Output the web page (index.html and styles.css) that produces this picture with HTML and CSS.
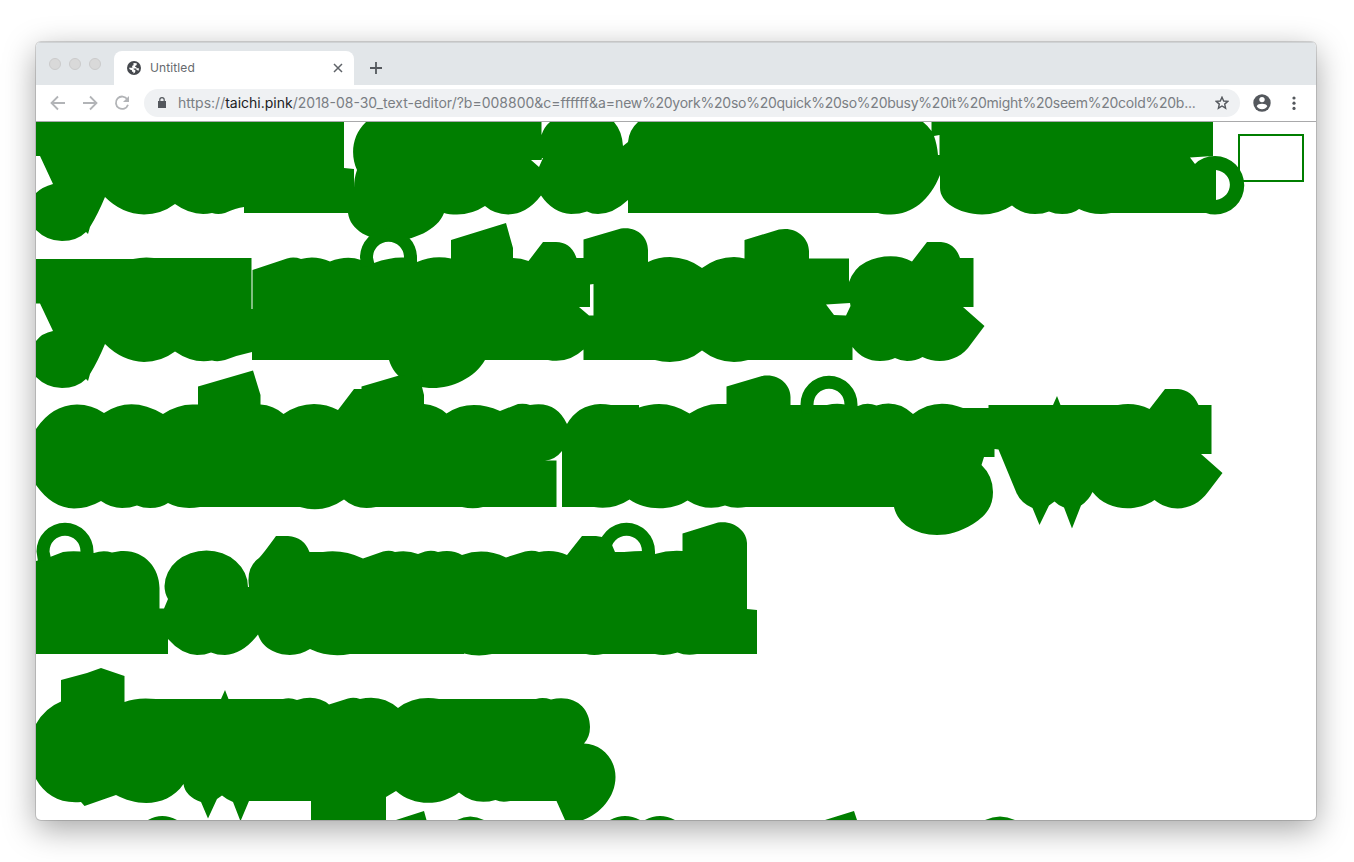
FILE: index.html
```html
<!DOCTYPE html>
<html lang="en">
<head>
<meta charset="utf-8">
<title>Untitled</title>
<link rel="stylesheet" href="styles.css">
</head>
<body>
<main class="window">
  <header class="tabstrip">
    <div class="lights"><i></i><i></i><i></i></div>
    <div class="tab">
      <svg class="globe" viewBox="0 0 14 14"><circle cx="7" cy="7" r="7" fill="#45484d"/><path d="M1.900 6.800H5Q6.900 6.900 6.900 8.800H8.300V10.600Q8 12.200 6.400 12.400V10.700H5V9.300Q2.300 9.200 1.900 6.800ZM6.500 1.900L9.700 2.300V3.700Q9.500 4.700 8.200 4.700V6.100H9.400V7.200H11.900Q12.200 8.700 11.100 10.100Q10.600 8.700 9.200 8.500V7.500H6.300Q5 7 5.100 5.500Q5.300 4.300 6.500 4.200Z" fill="#fff"/></svg>
      <span class="title">Untitled</span>
      <svg class="close" viewBox="0 0 10 10"><path d="M1 1L9 9M9 1L1 9" stroke="#5f6368" stroke-width="1.500"/></svg>
    </div>
    <svg class="plus" viewBox="0 0 12 12"><path d="M6 0V12M0 6H12" stroke="#54585d" stroke-width="1.800"/></svg>
  </header>
  <nav class="toolbar">
    <svg class="nav" viewBox="0 0 16 16"><path d="M15 8H2M8 1.500L1.500 8L8 14.500" fill="none" stroke="#b2b4b7" stroke-width="1.800"/></svg>
    <svg class="nav" viewBox="0 0 16 16"><path d="M1 8H14M8 1.500L14.500 8L8 14.500" fill="none" stroke="#b2b4b7" stroke-width="1.800"/></svg>
    <svg class="nav" viewBox="0 0 16 16"><path d="M13.300 4.300A6.200 6.200 0 1 0 14 9.700" fill="none" stroke="#b2b4b7" stroke-width="1.800"/><path d="M15 1V7H9Z" fill="#b2b4b7"/></svg>
    <div class="address">
      <svg class="lock" viewBox="0 0 8 11"><path d="M0 4H8V11H0Z" fill="#54585d"/><path d="M1.800 4V2.700A2.200 2.100 0 0 1 6.200 2.700V4" fill="none" stroke="#54585d" stroke-width="1.200"/></svg>
      <span class="url">https://<b>taichi.pink</b>/2018-08-30_text-editor/?b=008800&amp;c=ffffff&amp;a=<span class="query">new%20york%20so%20quick%20so%20busy%20it%20might%20seem%20cold%20b...</span></span>
      <svg class="star" viewBox="0 0 14 14"><path d="M7 1.200L8.700 5L12.800 5.400L9.700 8.100L10.600 12.200L7 10L3.400 12.200L4.300 8.100L1.200 5.400L5.300 5Z" fill="none" stroke="#54585d" stroke-width="1.400"/></svg>
    </div>
    <svg class="user" viewBox="0 0 18 18"><circle cx="9" cy="9" r="8.700" fill="#54585d"/><circle cx="9" cy="5.600" r="2.700" fill="#fff"/><path d="M3.700 12.200Q5 9.800 9 9.800T14.300 12.200Q12.500 15.200 9 15.200T3.700 12.200Z" fill="#fff"/></svg>
    <svg class="dots" viewBox="0 0 4 14"><g fill="#54585d"><circle cx="2" cy="2" r="1.600"/><circle cx="2" cy="7.200" r="1.600"/><circle cx="2" cy="12.400" r="1.600"/></g></svg>
  </nav>
  <section class="page">
    <svg class="canvas" viewBox="36 122 1280 698">
      <defs><path id="ring" d="M-28.500 0A28.500 28.800 0 0 1 28.500 0V8H15.500V0A15.500 15.800 0 0 0 -15.500 0L-14 7L-27 10Z"/></defs>
      <g fill="#007e00" fill-rule="evenodd">
        <!-- line 1 -->
        <path d="M36 122H344V168L354 169V213H244V207Q236 208 225 213Q218 215 212 213Q193 217 175 204Q161 214.500 144 214.500Q122 214 105 197Q98 214 90 227L88 234L86 232Q77 241 62 241Q47 241 36 230V193Q42 187 53 184L40 156H36Z"/>
        <path d="M366 122H541.500V135Q544 127 550 122H614Q622 131 623 146L628 142Q629 130 638 122H923Q927 125 931.500 131V122H1213V156L1190 157.500L1195 164Q1203 156 1215 156A29.250 29.250 0 0 1 1215 214.500Q1210 214.500 1206 213H1111Q1106 214 1101 214Q1089 214 1079 209Q1073 214 1062 214Q1055 214 1049 211.500Q1043 214 1035 214Q1022 214 1012 205.500Q998 214.500 982 214.500C958 214 940 202 940 188V175C930 200 912 214.500 891 214.500Q883 214.500 878 213H628V200Q613 214 598 214Q592 214 587 211.500Q580 214 571 214Q553 213 541 195.500Q527 214 508 214.500Q494 214 485 206Q472 214.500 457 214.500Q449 214.500 444 213C438 230 412 241 392 241C370 241 350 230 348 213H354V188Q354 178 357 170C350 155 352 135 366 122ZM531 160H541.500L542 158L543 158L539 167ZM934 136L939.500 135V155H938Q937 144 934 136ZM1216 170V200C1234 197 1235 173 1216 170Z"/>
        <!-- line 2 -->
        <path d="M36 259H133Q144 256.500 154 258H251.500V309H252.500V270L287 258.500Q294 256.500 301 259Q315 255 330 261.500Q347 255 361 260L374 263Q390 257 404 257.500L417 262Q433 255 451 258.500V240L506 223L513 248V258Q521 258 528.500 261L543 242H556Q571 242 576.500 258H583.500V239.500L621 228.500C637 226 648 237 648 250V262Q658 257 670 257Q688 257.500 702 268Q717 257 734 257Q740 257 744.500 258.500V240L779 229.500C796 226 809 238 809 251V258.500H849V282Q854 268 866 262C880 255 899 254 912 261.500L927 242H941Q955 243 960 258H973.500V307H963L984.500 326L971 344C960 361 939 365 922.500 357Q916 361 907 361Q901 361 895 358Q889 361 880 361Q863 361 852.500 347V360H748Q741 362 734 362Q717 362 702 350.500Q688 362 670 362Q662 362 655 360H583.500V349.500Q568 364 548 360H485C475 378 452 388 433 388C412 388 394 378 389 360H252V352Q238 355 225 360Q218 362 212 360.500Q193 364 175 351.500Q161 362 144 362Q122 361 105 344Q98 361 90 374L88 381L86 379Q77 388 62 388Q47 388 36 377V341Q42 333 53 331L40 303.500H36ZM590 284.500L593.500 284V315.500H589L579 307H590ZM826 304.500L850 303L850.500 306L846 315.500L834 315Z"/>
        <!-- line 3 -->
        <path d="M36 429Q52 405 77 404.500Q92 404.500 104 413Q131 395 163 414Q178 404 194 404.500H198V386.500L253 370.500L260.500 395V404.500Q273 405 283.500 414Q298 404 314 404Q327 404 338 410L354 389H361.500V386.500L399 375.500L421 375L422 387L424 395V404Q437 405 446.500 413.500Q470 398 500 411L518 404Q525 403 530 405Q556 400 567 424Q578 405 600 404Q606 404 611 405H639V407.500Q666 398 689.500 413.500Q704 404 718 404H726.500V386.500L762 376C778 373 790.500 384 790.500 397V405H827Q836 403 845 404.500L858 406Q867 402 876.500 405.500Q897 399 913 414Q935 397 963 408H988.500V405H1053L1057 396L1060.500 405H1118Q1135 402 1149.500 409L1165 389H1178Q1192 390 1198.500 405H1211.500V454H1201L1222.500 473L1208 492C1195 510 1172 514 1154.500 500C1136 513 1107 511 1092.500 492Q1089 500 1081 505.500L1072 528.500L1064 507.500Q1059 506 1054.500 501.500L1049 505.500L1039.500 525L1032.500 508Q1021 503 1016.500 493L998.500 449.500L994.500 449V457H984L981.500 465Q993 476 993 492C993 508 985 516 973 524C960 532 948 535 937 535C915 535 897 523 894 507H746Q734 509 725 505.500Q706 512 687.500 500.500C672 511 645 511 629.500 499.500Q614 510 594 507H562V451Q555 460 545 460.500H556.500V507H483Q473 509.500 462 507H376Q357 511 344 499.500Q323 514 300 507H200Q181 510 168 503Q161 508 150 508Q143 508 137 505.500Q130 508 122 508Q111 508 101 501Q88 508.500 74 508.500Q52 508 36 485Z"/>
        <!-- line 4 -->
        <path d="M36 561L50 557L63 552Q70 551 80 551.500L94 553Q103 550 112 552.500C140 545 159.500 565 159.500 588V608.500H164L168 599Q164.500 593 164.500 586A42 36 0 0 1 206.500 550.500A41.500 36.500 0 0 1 248 587H249Q246 567 259 558Q263 554 276 536H288Q304 537 309.500 552H323Q343 549 363 558.500L383 551.500Q390 550 395 552Q408 550 418 554L425 551.500Q432 550 438 552Q452 549 462 555Q484 547 506 557.500L525 551.500Q533 550 539 552Q554 549 567 555L582 536H596L602 537L612 545L615 552H624Q635 551 643 551L655 554Q668 550 682.500 551V533.500L718 522.500C735 520 747 532 747 543V609L757 610V654H697Q686 656 677.500 652.500Q666 656.500 655 654H603Q594 656 586 654H492Q478 657 464 653.500V654H350Q329 658 310 649C292 661 264 654 258 634.500Q243 654 225 655Q217 655 211 652.500Q205 655 197 655Q181 654 168 639V654H36Z"/>
        <!-- line 5 -->
        <path d="M36 724Q45 708 61 701.500V680L87 673L101 668L124.500 676V702Q137 697 156 699H221L225 690L228.500 699H283Q290 697 297 700Q316 694 329 704.500L348 698.500Q354 697 360 699Q382 694 398 708Q415 695 439 699H536Q543 697 551 699.500C575 694 590 708 590 727Q590 737 584 743.500C602 744 615.500 759 615.500 777C615.500 797 600 814 583 820H565L556.500 801H510Q502 803 495.500 800Q475 806 459 792.500C440 807 413 806 396 791L386 797V820H311V801H249L241 820H240L233 802Q226 799 222 795.500L217 799L208 818.500L201 802Q185 796 183.500 784C168 807 138 807 116 795L84.500 806L81 802C60 804 45 795 36 779Z"/>
        <!-- line 6, cut off by the window edge -->
        <path d="M148 820Q162 812 177 820ZM396 820L424 811L426.500 820ZM457 820Q470 813 484 820ZM610 820Q625 812 640 820ZM645 820Q660 812 675 820ZM825 820L854 811L857 820ZM985 820Q1000 813 1015 820Z"/>
        <use href="#ring" x="388.500" y="257.500"/>
        <use href="#ring" x="829" y="404.500"/>
        <use href="#ring" x="65" y="551.500"/>
        <use href="#ring" x="626.500" y="551.500"/>
      </g>
      <path d="M1239 170V135H1303V181H1240" fill="none" stroke="#007e00" stroke-width="2"/>
    </svg>
  </section>
</main>
</body>
</html>
```
FILE: styles.css
```css
* { box-sizing: border-box; }
html, body { height: 100%; }
body {
  margin: 0;
  padding: 42px 38px 41px 36px;
  overflow: hidden;
  background: #fff;
  font-family: Inter, Roboto, "Liberation Sans", sans-serif;
}
svg { display: block; flex: none; }
.window {
  width: 1280px;
  height: 778px;
  display: flex;
  flex-direction: column;
  border-radius: 5px;
  background: #fff;
  overflow: hidden;
  box-shadow: 0 0 0 1px rgba(0,0,0,.14), 0 9px 32px rgba(0,0,0,.36);
}
.tabstrip {
  height: 43px;
  flex: none;
  display: flex;
  align-items: flex-start;
  background: #e2e6e9;
  border-top: 1px solid #cfd2d4;
}
.lights { display: flex; gap: 8px; padding: 15px 0 0 13px; width: 78px; }
.lights i { width: 12px; height: 12px; border-radius: 50%; background: #d9d9d9; border: 1px solid #cbcbcb; }
.tab {
  width: 240px;
  height: 34px;
  margin-top: 8px;
  padding: 0 11px 0 13px;
  display: flex;
  align-items: center;
  border-radius: 8px 8px 0 0;
  background: #fff;
}
.globe { width: 14px; height: 14px; }
.title { flex: 1; margin-left: 9px; padding-bottom: 2px; font-size: 12px; letter-spacing: .1px; color: #66696d; }
.close { width: 10px; height: 10px; }
.plus { width: 12px; height: 12px; margin: 19px 0 0 16px; }
.toolbar {
  height: 37px;
  flex: none;
  display: flex;
  align-items: center;
  padding: 0 20px 1px 14px;
  border-bottom: 1px solid #a9a9ab;
}
.nav { width: 16px; height: 16px; margin-right: 16px; }
.address {
  width: 1096px;
  height: 28px;
  margin-left: -2px;
  padding: 0 11px 0 14px;
  display: flex;
  align-items: center;
  border-radius: 14px;
  background: #eff1f3;
}
.lock { width: 8px; height: 11px; }
.url { width: 1018px; margin-left: 12px; font-size: 14px; white-space: nowrap; color: #7a7e83; }
.url b { font-weight: 400; color: #202124; }
.query { letter-spacing: -.25px; }
.star { width: 14px; height: 14px; margin-left: auto; }
.user { width: 18px; height: 18px; margin-left: 13px; }
.dots { width: 4px; height: 14px; margin-left: auto; }
.page { flex: 1; min-height: 0; }
.canvas { width: 1280px; height: 698px; }
```
